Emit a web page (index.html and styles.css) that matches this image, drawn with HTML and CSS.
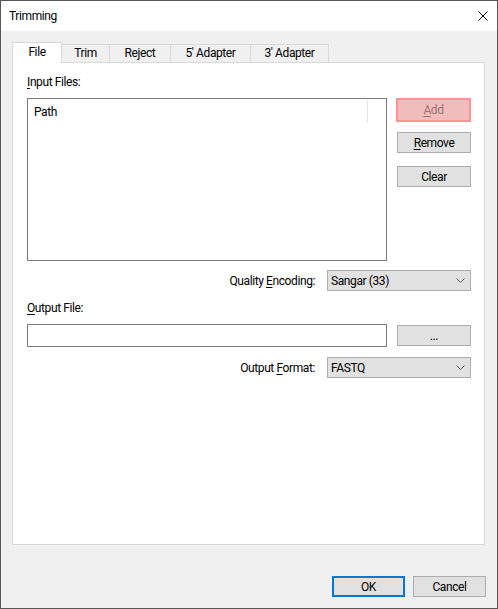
FILE: index.html
```html
<!DOCTYPE html>
<html>
<head>
<meta charset="utf-8">
<title>Trimming</title>
<link rel="stylesheet" href="styles.css">
</head>
<body>
<div class="window">
  <div class="titlebar">
    <span class="title">Trimming</span>
    <svg class="close" width="10" height="10" viewBox="0 0 10 10"><path d="M0.5 0.5 L9.5 9.5 M9.5 0.5 L0.5 9.5" stroke="#000" stroke-width="1" fill="none"/></svg>
  </div>
  <div class="client">
    <div class="tabs">
      <div class="tab tab-active tab-file">File</div>
      <div class="tab tab-trim">Trim</div>
      <div class="tab tab-reject">Reject</div>
      <div class="tab tab-5">5' Adapter</div>
      <div class="tab tab-3">3' Adapter</div>
    </div>
    <div class="panel">
      <div class="label label-input"><u>I</u>nput Files:</div>
      <div class="row-top">
        <div class="listbox">
          <div class="list-header">
            <span class="col-path">Path</span>
            <span class="col-sep"></span>
          </div>
        </div>
        <div class="side-buttons">
          <div class="btn btn-add"><u>A</u>dd</div>
          <div class="btn btn-remove"><u>R</u>emove</div>
          <div class="btn btn-clear">Clear</div>
        </div>
      </div>
      <div class="field-row field-quality">
        <span class="field-label">Quality <u>E</u>ncoding:</span>
        <div class="select"><span>Sangar (33)</span><svg class="chev" width="9" height="5" viewBox="0 0 9 5"><path d="M0.5 0.5 L4.5 4.5 L8.5 0.5" stroke="#606060" stroke-width="1" fill="none"/></svg></div>
      </div>
      <div class="label label-output"><u>O</u>utput File:</div>
      <div class="row-out">
        <div class="textbox"></div>
        <div class="btn btn-browse">...</div>
      </div>
      <div class="field-row field-format">
        <span class="field-label">Output <u>F</u>ormat:</span>
        <div class="select"><span>FASTQ</span><svg class="chev" width="9" height="5" viewBox="0 0 9 5"><path d="M0.5 0.5 L4.5 4.5 L8.5 0.5" stroke="#606060" stroke-width="1" fill="none"/></svg></div>
      </div>
    </div>
    <div class="footer">
      <div class="btn btn-ok">OK</div>
      <div class="btn btn-cancel">Cancel</div>
    </div>
  </div>
</div>
</body>
</html>
```

FILE: styles.css
```css
html, body {
  margin: 0;
  padding: 0;
  background: #ffffff;
}
body {
  font-family: "Segoe UI", Roboto, "Noto Sans", sans-serif;
  font-size: 12px;
  letter-spacing: -0.4px;
  color: #000;
}
u {
  text-decoration: underline;
  text-underline-offset: 2px;
}
.window {
  width: 498px;
  height: 609px;
  box-sizing: border-box;
  border: 1px solid #575757;
  display: flex;
  flex-direction: column;
}
.titlebar {
  height: 30px;
  flex: none;
  background: #fff;
  display: flex;
  align-items: center;
  justify-content: space-between;
  padding-left: 8px;
}
.title {
  font-size: 12px;
  line-height: 16px;
}
.close {
  margin-right: 9px;
  display: block;
}
.client {
  flex: 1;
  background: #f0f0f0;
  padding: 11px 12px 11px 11px;
  display: flex;
  flex-direction: column;
}
.tabs {
  height: 20px;
  display: flex;
  align-items: flex-end;
  flex: none;
}
.tab {
  box-sizing: border-box;
  height: 18px;
  border-top: 1px solid #d9d9d9;
  border-right: 1px solid #d9d9d9;
  background: #f0f0f0;
  text-align: center;
  line-height: 17px;
}
.tab-active {
  height: 21px;
  margin-bottom: -1px;
  background: #fff;
  border-left: 1px solid #d9d9d9;
  position: relative;
  z-index: 1;
  line-height: 18px;
}
.tab-file { width: 50px; }
.tab-trim { width: 48px; }
.tab-reject { width: 61px; }
.tab-5 { width: 80px; }
.tab-3 { width: 78px; }
.panel {
  flex: 1;
  background: #fff;
  border: 1px solid #d9d9d9;
  padding: 0 13px 0 14px;
  display: flex;
  flex-direction: column;
}
.label {
  line-height: 16px;
  height: 16px;
}
.label-input { margin-top: 11px; }
.label-output { margin-top: 9px; }
.row-top {
  margin-top: 8px;
  display: flex;
  gap: 10px;
}
.listbox {
  box-sizing: border-box;
  width: 360px;
  height: 163px;
  border: 1px solid #7a7a7a;
  background: #fff;
}
.list-header {
  display: flex;
  align-items: center;
  height: 26px;
  padding-left: 6px;
}
.col-path {
  width: 333px;
  line-height: 16px;
  margin-top: -1px;
}
.col-sep {
  width: 1px;
  height: 23px;
  background: #e5e5e5;
  align-self: flex-start;
  margin-top: 1px;
}
.side-buttons {
  display: flex;
  flex-direction: column;
}
.btn {
  box-sizing: border-box;
  width: 74px;
  height: 21px;
  background: #e1e1e1;
  border: 1px solid #adadad;
  display: flex;
  align-items: center;
  justify-content: center;
  line-height: 16px;
}
.btn-add {
  width: 75px;
  height: 24px;
  margin-left: -1px;
  border: 2px solid #ff9393;
  background: #f3bcbc;
  color: #9a7676;
}
.btn-remove { margin-top: 10px; }
.btn-clear { margin-top: 13px; }
.field-row {
  display: flex;
  justify-content: flex-end;
  align-items: center;
  gap: 12px;
}
.field-quality { margin-top: 9px; }
.field-format { margin-top: 10px; }
.field-label {
  line-height: 16px;
}
.select {
  box-sizing: border-box;
  width: 144px;
  height: 21px;
  background: #e1e1e1;
  border: 1px solid #adadad;
  display: flex;
  align-items: center;
  justify-content: space-between;
  padding: 0 5px 0 3px;
  line-height: 16px;
}
.chev {
  display: block;
}
.row-out {
  margin-top: 8px;
  display: flex;
  align-items: center;
  gap: 10px;
}
.textbox {
  box-sizing: border-box;
  width: 360px;
  height: 23px;
  border: 1px solid #7a7a7a;
  background: #fff;
}
.footer {
  margin-top: 31px;
  display: flex;
  justify-content: flex-end;
  gap: 8px;
  margin-right: -1px;
  flex: none;
}
.btn-ok {
  width: 73px;
  border: 2px solid #0078d7;
}
.btn-cancel {
  width: 73px;
}
```
